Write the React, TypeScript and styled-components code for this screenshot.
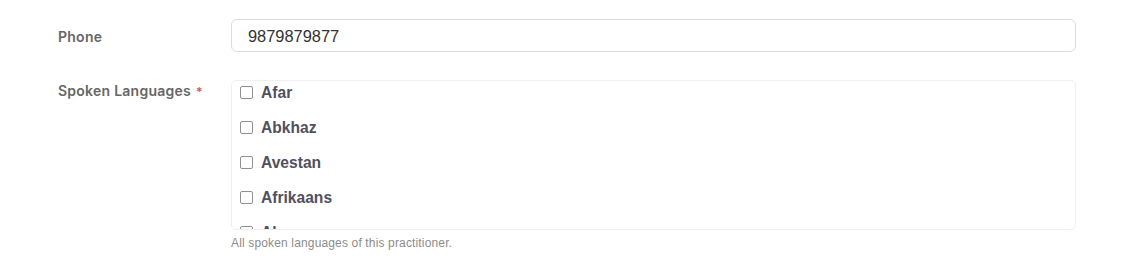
import React from "react";
import styled, { createGlobalStyle } from "styled-components";

const Global = createGlobalStyle`
  html, body { margin: 0; padding: 0; background: #fff; }
  * { box-sizing: border-box; }
`;

const Page = styled.div`
  padding: 19px 0 0 58px;
  width: 1137px;
  height: 268px;
  overflow: hidden;
`;

const FieldRow = styled.div<{ $mb: number }>`
  display: grid;
  grid-template-columns: 173px 845px;
  align-items: start;
  margin-bottom: ${(p) => p.$mb}px;
`;

const Label = styled.label<{ $pt: number }>`
  font-family: Inter, "Noto Sans", sans-serif;
  font-weight: 600;
  font-size: 14px;
  letter-spacing: 0.25px;
  color: #666;
  padding-top: ${(p) => p.$pt}px;
  line-height: 18px;
`;

const Req = styled.span`
  color: #e0505a;
  margin-left: 5px;
  font-size: 12px;
`;

const Input = styled.input`
  width: 100%;
  height: 33px;
  border: 1px solid #dcdcdc;
  border-radius: 6px;
  padding: 1px 16px 0;
  font-family: "Liberation Sans", Arial, sans-serif;
  font-size: 16.4px;
  color: #333;
  outline: none;
`;

const ListBox = styled.div`
  height: 150px;
  border: 1px solid #efefef;
  border-radius: 5px;
  overflow: hidden;
  padding: 0 8px;
`;

const Item = styled.label`
  display: flex;
  align-items: center;
  gap: 8px;
  height: 35px;
  margin-top: -6px;
  margin-bottom: 6px;
  font-family: "Liberation Sans", Arial, sans-serif;
  font-weight: 700;
  font-size: 15.6px;
  color: #505060;
`;

const Box = styled.span`
  width: 13px;
  height: 13px;
  border: 1px solid #909090;
  border-radius: 2px;
  flex: none;
`;

const Help = styled.div`
  font-family: "Liberation Sans", Arial, sans-serif;
  font-size: 12px;
  letter-spacing: 0.15px;
  color: #8c8c8c;
  margin-top: 6px;
`;

const Col = styled.div``;

const langs = ["Afar", "Abkhaz", "Avestan", "Afrikaans", "Akan"];

export default function App() {
  return (
    <>
      <Global />
      <Page>
        <FieldRow $mb={28}>
          <Label $pt={9}>Phone</Label>
          <Input defaultValue="9879879877" />
        </FieldRow>
        <FieldRow $mb={0}>
          <Label $pt={2}>
            Spoken Languages<Req>*</Req>
          </Label>
          <Col>
            <ListBox>
              {langs.map((l) => (
                <Item key={l}>
                  <Box />
                  {l}
                </Item>
              ))}
            </ListBox>
            <Help>All spoken languages of this practitioner.</Help>
          </Col>
        </FieldRow>
      </Page>
    </>
  );
}
